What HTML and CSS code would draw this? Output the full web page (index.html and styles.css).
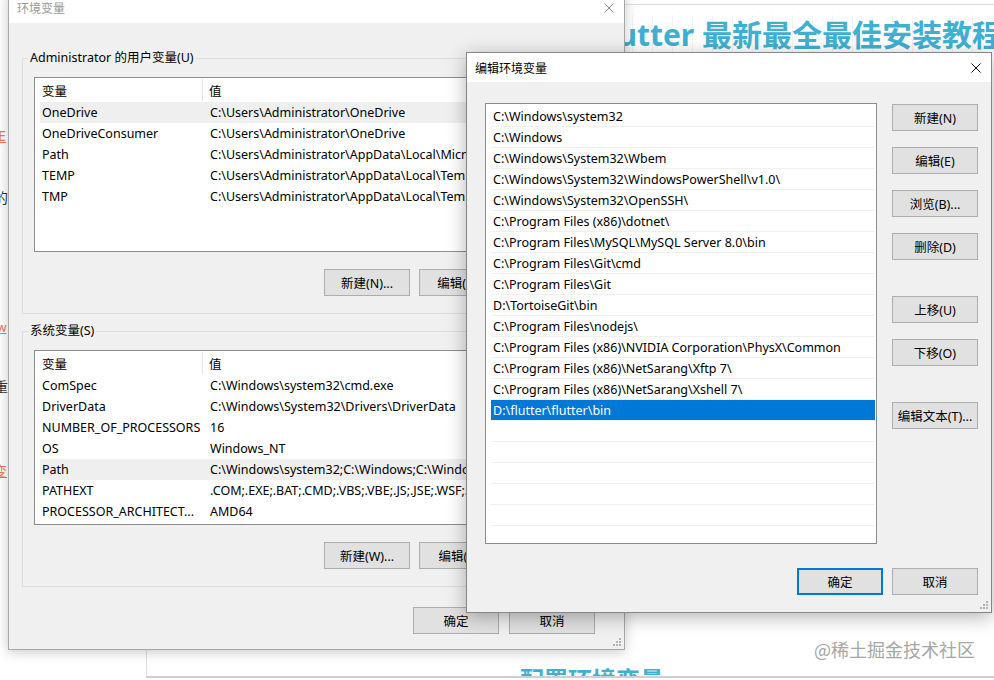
FILE: index.html
```html
<!DOCTYPE html>
<html lang="zh-CN">
<head>
  <meta charset="UTF-8">
  <title>环境变量</title>
  <link rel="stylesheet" href="styles.css">
</head>
<body>
  <!-- page behind the dialogs -->
  <span class="frag frag-link frag-e">E</span>
  <span class="frag frag-de">的</span>
  <span class="frag frag-link frag-w">w</span>
  <span class="frag frag-zhong">重</span>
  <span class="frag frag-link frag-bian">变</span>

  <div class="article">
    <h1>Flutter 最新最全最佳安装教程</h1>
    <h2>配置环境变量</h2>
  </div>

  <!-- 环境变量 -->
  <div class="win win-env">
    <div class="titlebar inactive">
      <span class="title">环境变量</span>
      <span class="close">
        <svg width="10" height="10" viewBox="0 0 10 10"><path d="M0.5 0.5L9.5 9.5M9.5 0.5L0.5 9.5" stroke="#8a8a8a" stroke-width="1"/></svg>
      </span>
    </div>
    <div class="win-body">
      <fieldset class="group">
        <legend>Administrator 的用户变量(U)</legend>
        <div class="listview">
          <div class="lv-head"><span class="c1">变量</span><span class="c2">值</span></div>
          <div class="lv-row sel"><span class="c1">OneDrive</span><span class="c2">C:\Users\Administrator\OneDrive</span></div>
          <div class="lv-row"><span class="c1">OneDriveConsumer</span><span class="c2">C:\Users\Administrator\OneDrive</span></div>
          <div class="lv-row"><span class="c1">Path</span><span class="c2">C:\Users\Administrator\AppData\Local\Microsoft\WindowsApps;</span></div>
          <div class="lv-row"><span class="c1">TEMP</span><span class="c2">C:\Users\Administrator\AppData\Local\Temp</span></div>
          <div class="lv-row"><span class="c1">TMP</span><span class="c2">C:\Users\Administrator\AppData\Local\Temp</span></div>
        </div>
        <div class="btn-row">
          <button type="button" class="btn">新建(N)...</button>
          <button type="button" class="btn">编辑(E)...</button>
          <button type="button" class="btn">删除(D)</button>
        </div>
      </fieldset>

      <fieldset class="group group-sys">
        <legend>系统变量(S)</legend>
        <div class="listview">
          <div class="lv-head"><span class="c1">变量</span><span class="c2">值</span></div>
          <div class="lv-row"><span class="c1">ComSpec</span><span class="c2">C:\Windows\system32\cmd.exe</span></div>
          <div class="lv-row"><span class="c1">DriverData</span><span class="c2">C:\Windows\System32\Drivers\DriverData</span></div>
          <div class="lv-row"><span class="c1">NUMBER_OF_PROCESSORS</span><span class="c2">16</span></div>
          <div class="lv-row"><span class="c1">OS</span><span class="c2">Windows_NT</span></div>
          <div class="lv-row sel"><span class="c1">Path</span><span class="c2">C:\Windows\system32;C:\Windows;C:\Windows\System32\Wbem;</span></div>
          <div class="lv-row"><span class="c1">PATHEXT</span><span class="c2">.COM;.EXE;.BAT;.CMD;.VBS;.VBE;.JS;.JSE;.WSF;.WSH;.MSC</span></div>
          <div class="lv-row"><span class="c1">PROCESSOR_ARCHITECT...</span><span class="c2">AMD64</span></div>
        </div>
        <div class="btn-row">
          <button type="button" class="btn">新建(W)...</button>
          <button type="button" class="btn">编辑(I)...</button>
          <button type="button" class="btn">删除(L)</button>
        </div>
      </fieldset>

      <div class="dlg-foot env-foot">
        <button type="button" class="btn">确定</button>
        <button type="button" class="btn">取消</button>
      </div>
    </div>
    <svg class="grip" width="8" height="8" viewBox="0 0 8 8"><g fill="#b4b4b4"><rect x="6" y="0" width="2" height="2"/><rect x="3" y="3" width="2" height="2"/><rect x="6" y="3" width="2" height="2"/><rect x="0" y="6" width="2" height="2"/><rect x="3" y="6" width="2" height="2"/><rect x="6" y="6" width="2" height="2"/></g></svg>
  </div>

  <!-- 编辑环境变量 -->
  <div class="win win-edit">
    <div class="titlebar">
      <span class="title">编辑环境变量</span>
      <span class="close">
        <svg width="10" height="10" viewBox="0 0 10 10"><path d="M0.5 0.5L9.5 9.5M9.5 0.5L0.5 9.5" stroke="#111" stroke-width="1"/></svg>
      </span>
    </div>
    <div class="edit-body">
      <div class="edit-main">
        <div class="pathlist">
          <div class="path-row">C:\Windows\system32</div>
          <div class="path-row">C:\Windows</div>
          <div class="path-row">C:\Windows\System32\Wbem</div>
          <div class="path-row">C:\Windows\System32\WindowsPowerShell\v1.0\</div>
          <div class="path-row">C:\Windows\System32\OpenSSH\</div>
          <div class="path-row">C:\Program Files (x86)\dotnet\</div>
          <div class="path-row">C:\Program Files\MySQL\MySQL Server 8.0\bin</div>
          <div class="path-row">C:\Program Files\Git\cmd</div>
          <div class="path-row">C:\Program Files\Git</div>
          <div class="path-row">D:\TortoiseGit\bin</div>
          <div class="path-row">C:\Program Files\nodejs\</div>
          <div class="path-row">C:\Program Files (x86)\NVIDIA Corporation\PhysX\Common</div>
          <div class="path-row">C:\Program Files (x86)\NetSarang\Xftp 7\</div>
          <div class="path-row">C:\Program Files (x86)\NetSarang\Xshell 7\</div>
          <div class="path-row sel">D:\flutter\flutter\bin</div>
          <div class="path-row"></div>
          <div class="path-row"></div>
          <div class="path-row"></div>
          <div class="path-row"></div>
          <div class="path-row"></div>
          <div class="path-row"></div>
        </div>
        <div class="btn-col">
          <button type="button" class="btn">新建(N)</button>
          <button type="button" class="btn">编辑(E)</button>
          <button type="button" class="btn">浏览(B)...</button>
          <button type="button" class="btn">删除(D)</button>
          <button type="button" class="btn gap">上移(U)</button>
          <button type="button" class="btn">下移(O)</button>
          <button type="button" class="btn gap">编辑文本(T)...</button>
        </div>
      </div>
      <div class="dlg-foot edit-foot">
        <button type="button" class="btn default">确定</button>
        <button type="button" class="btn">取消</button>
      </div>
    </div>
    <svg class="grip" width="8" height="8" viewBox="0 0 8 8"><g fill="#b4b4b4"><rect x="6" y="0" width="2" height="2"/><rect x="3" y="3" width="2" height="2"/><rect x="6" y="3" width="2" height="2"/><rect x="0" y="6" width="2" height="2"/><rect x="3" y="6" width="2" height="2"/><rect x="6" y="6" width="2" height="2"/></g></svg>
  </div>

  <div class="watermark">@稀土掘金技术社区</div>
</body>
</html>
```

FILE: styles.css
```css
* {
  box-sizing: border-box;
}
body {
  margin: 0;
  width: 994px;
  height: 680px;
  overflow: hidden;
  position: relative;
  background: #fff;
  font-family: "Noto Sans", "Noto Sans CJK SC", sans-serif;
  font-size: 12.5px;
  color: #000;
}

/* article behind */
.article {
  position: absolute;
  left: 146px;
  top: 4px;
  width: 860px;
  height: 674px;
  overflow: hidden;
  border: 1px solid #dedede;
  border-bottom: 2px solid #cfcfcf;
  background: #fff;
}
.article h1 {
  margin: 10px 0 0 445px;
  font-size: 30px;
  line-height: 40px;
  color: #3fb0d2;
  white-space: nowrap;
  background-image: linear-gradient(90deg, rgba(60,10,30,.05) 3%, transparent 0);
  background-size: 20px 20px;
}
.article h2 {
  margin: 609px 0 0 373px;
  font-size: 24px;
  line-height: 32px;
  color: #3fb0d2;
  white-space: nowrap;
}
.frag {
  position: absolute;
  font-size: 14px;
  line-height: 16px;
  color: #333;
}
.frag-link {
  color: #ef7060;
  text-decoration: underline;
}
.frag-e { left: -2px; top: 128px; }
.frag-de { left: -6px; top: 190px; }
.frag-w { left: -3px; top: 320px; font-size: 12px; }
.frag-zhong { left: -6px; top: 379px; }
.frag-bian { left: -7px; top: 463px; }

/* windows */
.win {
  position: absolute;
  display: flex;
  flex-direction: column;
  background: #f0f0f0;
}
.win-env {
  left: 8px;
  top: -8px;
  width: 617px;
  height: 658px;
  border: 1px solid #a8a8a8;
  box-shadow: 0 2px 12px rgba(0,0,0,.22);
}
.win-edit {
  left: 466px;
  top: 52px;
  width: 526px;
  height: 561px;
  border: 1px solid #858585;
  box-shadow: 0 4px 18px rgba(0,0,0,.3);
}
.titlebar {
  flex: none;
  height: 30px;
  background: #fff;
  display: flex;
  align-items: center;
  justify-content: space-between;
  padding-left: 8px;
}
.win-edit .titlebar {
  height: 29px;
}
.title {
  font-size: 12px;
}
.inactive .title {
  color: #999;
}
.close {
  width: 30px;
  height: 100%;
  display: flex;
  align-items: center;
  justify-content: center;
}
.grip {
  position: absolute;
  right: 3px;
  bottom: 3px;
}

/* buttons */
.btn {
  flex: none;
  width: 86px;
  height: 27px;
  padding: 0;
  background: #e1e1e1;
  border: 1px solid #adadad;
  font: inherit;
  color: #000;
}
.btn.default {
  border: 2px solid #0078d7;
}

/* 环境变量 body */
.win-body {
  flex: 1;
  display: flex;
  flex-direction: column;
  padding: 0 12px 0 13px;
}
.group {
  margin: 26px 0 0;
  padding: 10px 11px 17px;
  border: 1px solid #dcdcdc;
  min-width: 0;
}
.group-sys {
  margin-top: 8px;
}
.group legend {
  padding: 0 2px;
  margin-left: -6px;
  line-height: 18px;
}
.listview {
  height: 175px;
  background: #fff;
  border: 1px solid #8c8c8c;
  overflow: hidden;
}
.lv-head {
  display: flex;
  height: 24px;
}
.lv-head span {
  display: flex;
  align-items: center;
}
.lv-head .c1 {
  width: 168px;
  padding-left: 7px;
  border-right: 1px solid #e5e5e5;
  margin: 1px 0;
}
.lv-head .c2 {
  padding-left: 6px;
}
.lv-row {
  display: flex;
  align-items: center;
  height: 21px;
  margin-left: 5px;
  white-space: nowrap;
}
.lv-row.sel {
  background: #efefef;
}
.lv-row .c1 {
  flex: none;
  width: 163px;
  padding-left: 2px;
}
.lv-row .c2 {
  padding-left: 7px;
}
.btn-row {
  display: flex;
  justify-content: flex-end;
  gap: 9px;
  margin-top: 17px;
}
.dlg-foot {
  display: flex;
  justify-content: flex-end;
}
.env-foot {
  gap: 10px;
  margin: 20px 17px 0 0;
}

/* 编辑环境变量 body */
.edit-body {
  flex: 1;
  display: flex;
  flex-direction: column;
  padding: 21px 13px 0 18px;
}
.edit-main {
  display: flex;
  gap: 15px;
}
.pathlist {
  width: 392px;
  height: 441px;
  padding-top: 2px;
  background: #fff;
  border: 1px solid #8c8c8c;
  overflow: hidden;
}
.path-row {
  height: 21px;
  line-height: 22px;
  margin: 0 1px 0 5px;
  padding-left: 2px;
  border-bottom: 1px solid #f0f0f0;
  white-space: nowrap;
}
.path-row.sel {
  background: #0078d7;
  color: #fff;
}
.btn-col {
  display: flex;
  flex-direction: column;
  gap: 16px;
  padding-top: 1px;
}
.btn-col .gap {
  margin-top: 20px;
}
.edit-foot {
  gap: 9px;
  margin-top: 24px;
}

.watermark {
  position: absolute;
  right: 19px;
  top: 637px;
  font-size: 18px;
  line-height: 24px;
  color: #a6a6a6;
  font-family: "Noto Sans CJK SC", sans-serif;
}
```
